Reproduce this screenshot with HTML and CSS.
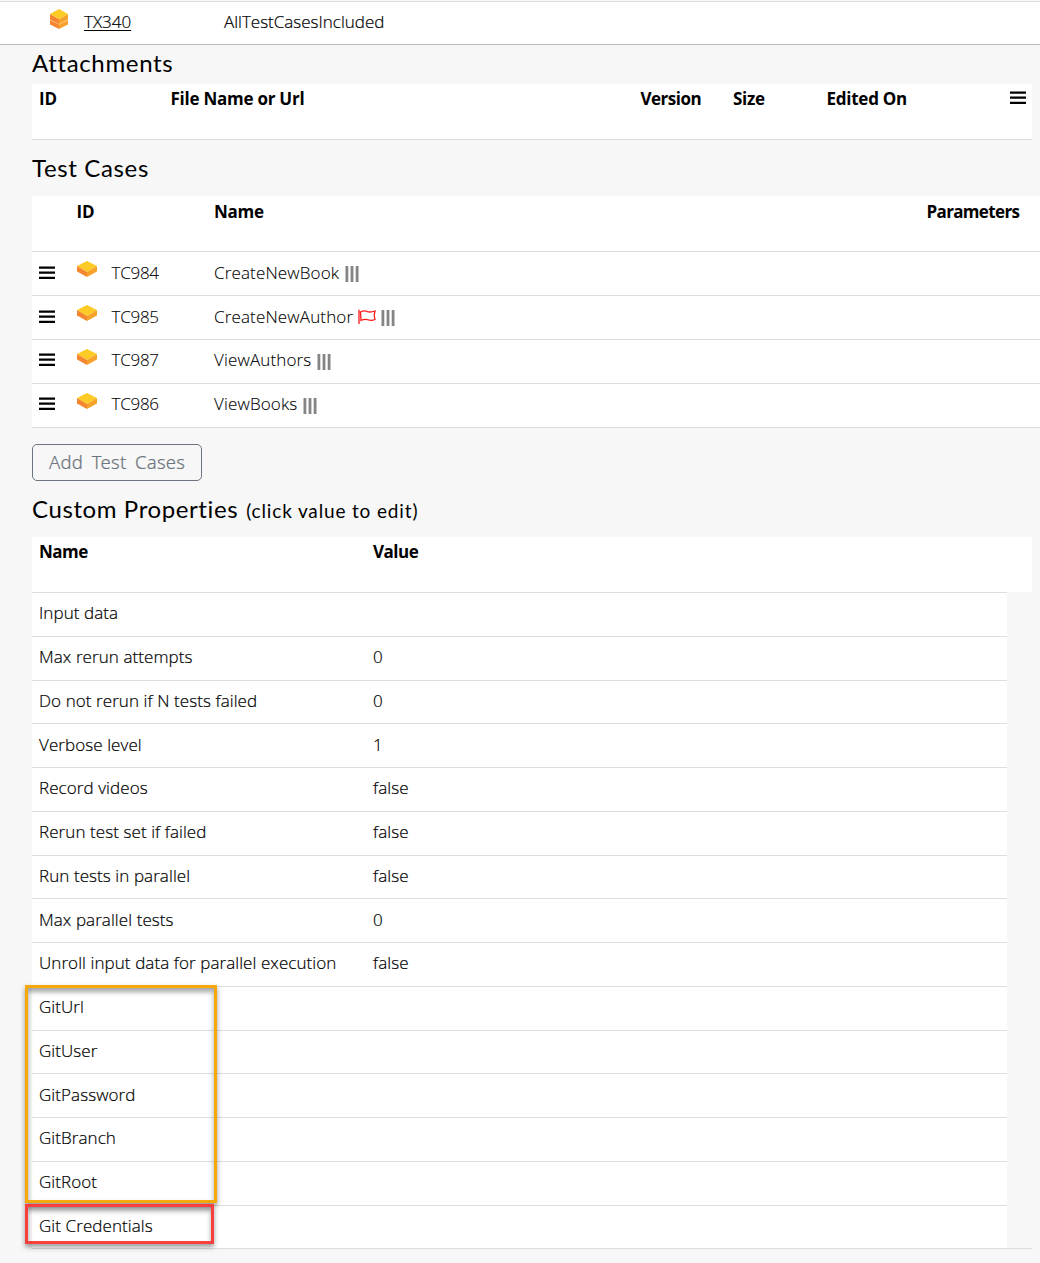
FILE: index.html
```
<!DOCTYPE html>
<html lang="en">
<head>
<meta charset="utf-8">
<title>Test Set</title>
<link rel="stylesheet" href="styles.css">
</head>
<body>
<svg width="0" height="0" class="defs">
  <symbol id="menu" viewBox="0 0 16 14"><path d="M0 .5h16v2.3H0zM0 5.500h16v2.300H0zM0 10.700h16V13H0z"/></symbol>
  <symbol id="block" viewBox="0 0 20 16"><path fill="#fdcb26" d="M10 0l10 5-10 6L0 5z"/><path fill="#f5862f" d="M0 5l10 6v5L0 10.500z"/><path fill="#f7a32b" d="M20 5l-10 6v5l10-5.500z"/></symbol>
  <symbol id="stack" viewBox="0 0 18 20"><path fill="#f5862f" d="M0 11l9 4.500v4.500l-9-4.500z"/><path fill="#f7a32b" d="M18 11l-9 4.500v4.500l9-4.500z"/><path fill="#f5862f" d="M0 5l9 5v5.200L0 10.500z"/><path fill="#f7a32b" d="M18 5l-9 5v5.200l9-4.700z"/><path fill="#fdcb26" d="M9 0l9 5-9 5-9-5z"/></symbol>
  <symbol id="bars" viewBox="0 0 14 16"><path fill="#858585" d="M.5 0h2.800v16H.5zM5.600 0h2.800v16H5.600zM10.700 0h2.800v16h-2.800z"/></symbol>
  <symbol id="flag" viewBox="0 0 18 16"><path fill="none" stroke="#ff1a1a" stroke-width="1.300" d="M1 .8V15M2.500 3c3-1.500 5-1.300 7-.4 2 .8 4 .6 7.500-.6l-.8 4.300.8 4.200c-3 1.300-5 1-7.500.2-2-.7-4-.5-6.500.6z"/></symbol>
</svg>

<header class="topbar">
  <svg class="icon-stack"><use href="#stack"/></svg>
  <a class="set-id"><span>TX340</span></a>
  <span class="set-name">AllTestCasesIncluded</span>
</header>

<main class="content">
  <h2 class="title title-attachments">Attachments</h2>
  <div class="table-head attachments">
    <span>ID</span><span>File Name or Url</span><span class="version">Version</span><span>Size</span><span>Edited On</span>
    <svg class="icon-menu"><use href="#menu"/></svg>
  </div>

  <h2 class="title title-cases">Test Cases</h2>
  <section class="cases">
    <div class="table-head cases-head"><span>ID</span><span>Name</span><span class="parameters">Parameters</span></div>
    <div class="case-row"><svg class="icon-menu"><use href="#menu"/></svg><svg class="icon-block"><use href="#block"/></svg><span>TC984</span><span class="case-name"><span>CreateNewBook</span><svg class="icon-bars"><use href="#bars"/></svg></span></div>
    <div class="case-row"><svg class="icon-menu"><use href="#menu"/></svg><svg class="icon-block"><use href="#block"/></svg><span>TC985</span><span class="case-name"><span>CreateNewAuthor</span><svg class="icon-flag"><use href="#flag"/></svg><svg class="icon-bars"><use href="#bars"/></svg></span></div>
    <div class="case-row"><svg class="icon-menu"><use href="#menu"/></svg><svg class="icon-block"><use href="#block"/></svg><span>TC987</span><span class="case-name"><span>ViewAuthors</span><svg class="icon-bars"><use href="#bars"/></svg></span></div>
    <div class="case-row"><svg class="icon-menu"><use href="#menu"/></svg><svg class="icon-block"><use href="#block"/></svg><span>TC986</span><span class="case-name"><span>ViewBooks</span><svg class="icon-bars"><use href="#bars"/></svg></span></div>
  </section>

  <button class="add-button">Add Test Cases</button>

  <h2 class="title title-props"><span>Custom Properties</span><small class="hint">(click value to edit)</small></h2>
  <section class="props">
    <div class="table-head props-head"><span>Name</span><span>Value</span></div>
    <div class="prop-row"><span>Input data</span></div>
    <div class="prop-row"><span>Max rerun attempts</span><span>0</span></div>
    <div class="prop-row"><span>Do not rerun if N tests failed</span><span>0</span></div>
    <div class="prop-row"><span>Verbose level</span><span>1</span></div>
    <div class="prop-row"><span>Record videos</span><span>false</span></div>
    <div class="prop-row"><span>Rerun test set if failed</span><span>false</span></div>
    <div class="prop-row"><span>Run tests in parallel</span><span>false</span></div>
    <div class="prop-row"><span>Max parallel tests</span><span>0</span></div>
    <div class="prop-row"><span>Unroll input data for parallel execution</span><span>false</span></div>
    <div class="prop-row"><span>GitUrl</span></div>
    <div class="prop-row"><span>GitUser</span></div>
    <div class="prop-row"><span>GitPassword</span></div>
    <div class="prop-row"><span>GitBranch</span></div>
    <div class="prop-row"><span>GitRoot</span></div>
    <div class="prop-row"><span>Git Credentials</span></div>
    <div class="mark mark-git"></div>
    <div class="mark mark-credentials"></div>
  </section>
</main>
</body>
</html>
```
FILE: styles.css
```
* { box-sizing: border-box; }
body {
  margin: 0;
  height: 1263px;
  overflow: hidden;
  background: #f7f7f7;
  color: #000;
  font: 300 17px/24px "Open Sans", "Noto Sans", sans-serif;
}
svg { display: block; flex: none; }
.defs { position: absolute; }
.topbar {
  display: flex;
  height: 44px;
  margin-top: 1px;
  padding: 8px 0 0 50px;
  border-top: 1px solid #ddd;
  border-bottom: 1px solid #bbb;
  background: #fff;
  -webkit-text-stroke: 0.2px;
}
.icon-stack { width: 18px; height: 20px; margin: -1px 16px 0 0; }
.set-id { width: 140px; text-decoration: underline; text-underline-offset: 2px; text-decoration-thickness: 1px; }
.content { margin-left: 32px; }
.title {
  display: flex;
  align-items: baseline;
  margin: 0;
  font: 400 24px/30px Lato, sans-serif;
  letter-spacing: 0.65px;
}
.title-attachments { height: 39px; padding-top: 3px; }
.title-cases { height: 56px; padding-top: 13px; }
.title-props { height: 56px; padding-top: 13px; letter-spacing: 0.6px; }
.hint { margin-left: 8px; font-size: 19px; letter-spacing: 0.85px; }
.table-head {
  display: grid;
  height: 55px;
  padding: 3px 0 0 7px;
  background: #fff;
  font-weight: 700;
  letter-spacing: -0.25px;
}
.attachments {
  grid-template-columns: 131.500px 470px 92.500px 93.500px 183.500px 16px;
  width: 1000px;
  height: 56px;
  border-bottom: 1px solid #ddd;
}
.version { letter-spacing: -0.5px; }
.parameters { letter-spacing: -0.65px; }
.icon-menu { width: 16px; height: 14px; }
.attachments .icon-menu { margin-top: 4px; }
.cases-head { grid-template-columns: 137.500px 712.500px auto; padding: 4px 0 0 44.500px; }
.cases { border-bottom: 1px solid #ddd; }
.case-row {
  display: grid;
  grid-template-columns: 38px 34.500px 102.500px auto;
  height: 44px;
  padding: 9px 0 0 7px;
  border-top: 1px solid #ddd;
  background: #fff;
  letter-spacing: -0.25px;
  -webkit-text-stroke: 0.1px;
}
.case-row:nth-child(n+4) { padding-top: 8px; }
.case-row:nth-child(n+4) .icon-block { margin-top: 1px; }
.case-row .icon-menu { margin-top: 5px; }
.icon-block { width: 20px; height: 16px; }
.case-name { display: flex; letter-spacing: 0.15px; }
.icon-bars { width: 14px; height: 16px; margin: 5px 0 0 5.500px; }
.case-row:nth-child(n+4) .icon-bars { margin-top: 6px; }
.icon-flag { width: 18px; height: 16px; margin: 4px 0 0 5px; }
.icon-flag + .icon-bars { margin-left: 5px; }
.add-button {
  display: block;
  width: 170px;
  height: 37px;
  margin: 16px 0 0;
  padding: 0 0 2px 16px;
  border: 1px solid #6c757d;
  border-radius: 5px;
  background: transparent;
  color: #6c757d;
  font: 300 18.500px/30px "Noto Sans", "Open Sans", sans-serif;
  letter-spacing: 0.25px;
  word-spacing: 3.500px;
  text-align: left;
  white-space: nowrap;
  -webkit-text-stroke: 0.2px;
}
.props { position: relative; width: 1000px; border-bottom: 1px solid #ddd; }
.props-head { grid-template-columns: 334px auto; letter-spacing: -0.5px; }
.prop-row {
  display: grid;
  grid-template-columns: 334px auto;
  width: 975px;
  height: 43.770px;
  padding: 8.300px 0 0 7px;
  border-top: 1px solid #ddd;
  background: #fff;
  letter-spacing: 0.08px;
  -webkit-text-stroke: 0.2px;
}
.mark { position: absolute; left: -7px; border: 3px solid #f7a80b; box-shadow: 0 3px 5px rgba(0,0,0,.4), inset 0 4px 5px rgba(0,0,0,.35); }
.mark-git { top: 448px; width: 192px; height: 218px; }
.mark-credentials { top: 667px; width: 189px; height: 40px; border-color: #f9403f; }
```
